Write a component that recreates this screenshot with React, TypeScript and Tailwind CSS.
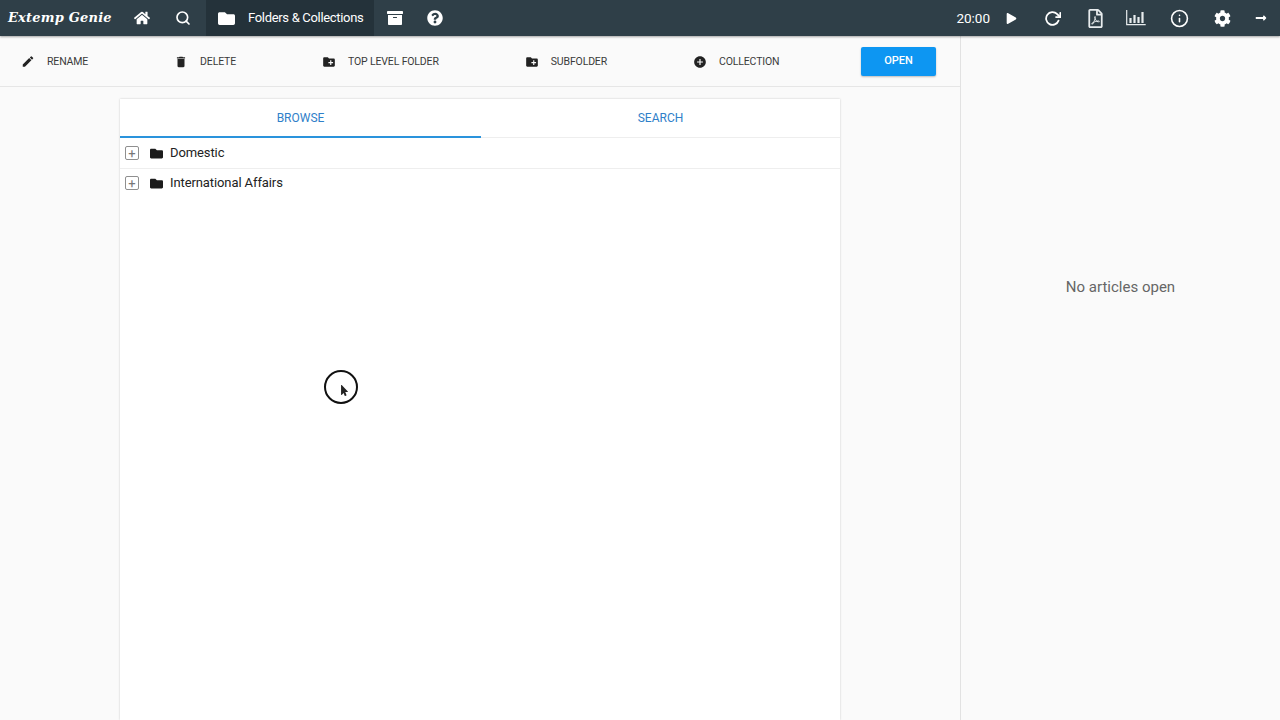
import { FaHome, FaFolder, FaArchive, FaQuestionCircle, FaPlay, FaCog, FaLongArrowAltRight, FaRegFilePdf, FaMousePointer } from "react-icons/fa";
import { MdEdit, MdDelete, MdCreateNewFolder, MdAddCircle } from "react-icons/md";
import { FiSearch, FiRotateCw, FiInfo } from "react-icons/fi";

const font = "font-['Roboto','Liberation_Sans',sans-serif]";

function BarChart() {
  return (
    <svg width="20" height="16" viewBox="0 0 20 16" fill="none" stroke="#e8ecee">
      <path d="M0.7 0v14.6h19" strokeWidth="1.2" />
      <path d="M4.5 8v5M8.5 5v8M12.5 7v6M16.5 2v11" strokeWidth="2.2" />
    </svg>
  );
}

function ToolItem({ icon, label }: { icon: React.ReactNode; label: string }) {
  return (
    <div className="flex items-center gap-[12px] text-[10.5px] text-[#3a3a3a]">
      <span className="flex w-[14px] justify-center text-[#222]">{icon}</span>
      <span className="tracking-[-0.15px]">{label}</span>
    </div>
  );
}

function FolderRow({ name, first }: { name: string; first?: boolean }) {
  return (
    <div className={`flex items-center pl-[5px] text-[13px] tracking-[-0.1px] text-[#222] ${first ? "h-[31px] border-b border-[#eeeeee]" : "h-[28px]"}`}>
      <span className="flex h-[14px] w-[14px] items-center justify-center rounded-[2px] border border-[#8f8f8f] text-[13px] leading-none text-[#777]">+</span>
      <FaFolder className="ml-[11px] text-[13px] text-[#1c1c1c]" />
      <span className="ml-[7px]">{name}</span>
    </div>
  );
}

export default function App() {
  return (
    <div className={`relative flex h-[720px] w-[1280px] flex-col overflow-hidden bg-[#fafafa] ${font}`}>
      {/* Top bar */}
      <header className="z-10 flex h-[36px] shrink-0 items-center bg-[#2f3f48] text-white shadow-[0_1px_2px_rgba(0,0,0,0.35)]">
        <div className="ml-[8px] w-[106px] font-['DejaVu_Serif',serif] text-[13px] font-bold italic tracking-[0.2px] whitespace-nowrap">Extemp Genie</div>
        <FaHome className="ml-[20px] text-[16px]" />
        <FiSearch className="ml-[25px] text-[16px]" strokeWidth={2.5} />
        <div className="ml-[15px] flex h-full w-[168px] items-center bg-[#24323a] pl-[12px]">
          <FaFolder className="text-[17px]" />
          <span className="ml-[13px] text-[13px] tracking-[-0.32px]">Folders &amp; Collections</span>
        </div>
        <FaArchive className="ml-[13px] text-[16px]" />
        <FaQuestionCircle className="ml-[24px] text-[16px]" />
        <div className="ml-auto flex items-center">
          <span className="text-[13.5px]">20:00</span>
          <FaPlay className="ml-[16px] text-[11px]" />
          <FiRotateCw className="ml-[27px] text-[17px]" strokeWidth={2.5} />
          <FaRegFilePdf className="ml-[25px] text-[19px] text-[#e8ecee]" />
          <span className="ml-[21px] flex"><BarChart /></span>
          <FiInfo className="ml-[24px] text-[19px]" />
          <FaCog className="ml-[25px] text-[17px]" />
          <FaLongArrowAltRight className="mr-[13px] ml-[24px] text-[12px]" />
        </div>
      </header>

      <div className="flex min-h-0 flex-1">
        {/* Left column */}
        <div className="flex w-[961px] shrink-0 flex-col border-r border-[#e2e2e2]">
          <div className="flex h-[51px] shrink-0 items-center border-b border-[#e6e6e6] pt-[1px] pr-[24px] pl-[21px]">
            <div className="flex items-center gap-[86px]">
              <ToolItem icon={<MdEdit className="text-[15px]" />} label="RENAME" />
              <ToolItem icon={<MdDelete className="text-[16px]" />} label="DELETE" />
              <ToolItem icon={<MdCreateNewFolder className="text-[16px]" />} label="TOP LEVEL FOLDER" />
              <ToolItem icon={<MdCreateNewFolder className="text-[16px]" />} label="SUBFOLDER" />
              <ToolItem icon={<MdAddCircle className="text-[16px]" />} label="COLLECTION" />
            </div>
            <button className="ml-auto h-[29px] w-[75px] rounded-[2px] bg-[#0d96f2] text-[11px] font-medium text-white shadow-[0_1px_2px_rgba(0,0,0,0.25)]">OPEN</button>
          </div>

          <div className="flex min-h-0 flex-1 justify-center pt-[12px]">
            <div className="w-[720px] bg-white shadow-[0_0_2px_rgba(0,0,0,0.2)]">
              <div className="flex h-[39px] border-b border-[#eeeeee] text-[12px] text-[#2f80c9]">
                <div className="flex h-[39px] w-[361px] items-center justify-center border-b-2 border-[#2a93dc]">BROWSE</div>
                <div className="flex flex-1 items-center justify-center">SEARCH</div>
              </div>
              <FolderRow name="Domestic" first />
              <FolderRow name="International Affairs" />
            </div>
          </div>
        </div>

        {/* Right column */}
        <div className="flex flex-1 justify-center pt-[240px] text-[15px] text-[#666666]">No articles open</div>
      </div>

      {/* Cursor highlight */}
      <div className="absolute top-[370px] left-[324px] h-[34px] w-[34px] rounded-full border-[2.5px] border-[#111]">
        <FaMousePointer className="absolute top-[13px] left-[13px] text-[11px] text-[#222]" />
      </div>
    </div>
  );
}
